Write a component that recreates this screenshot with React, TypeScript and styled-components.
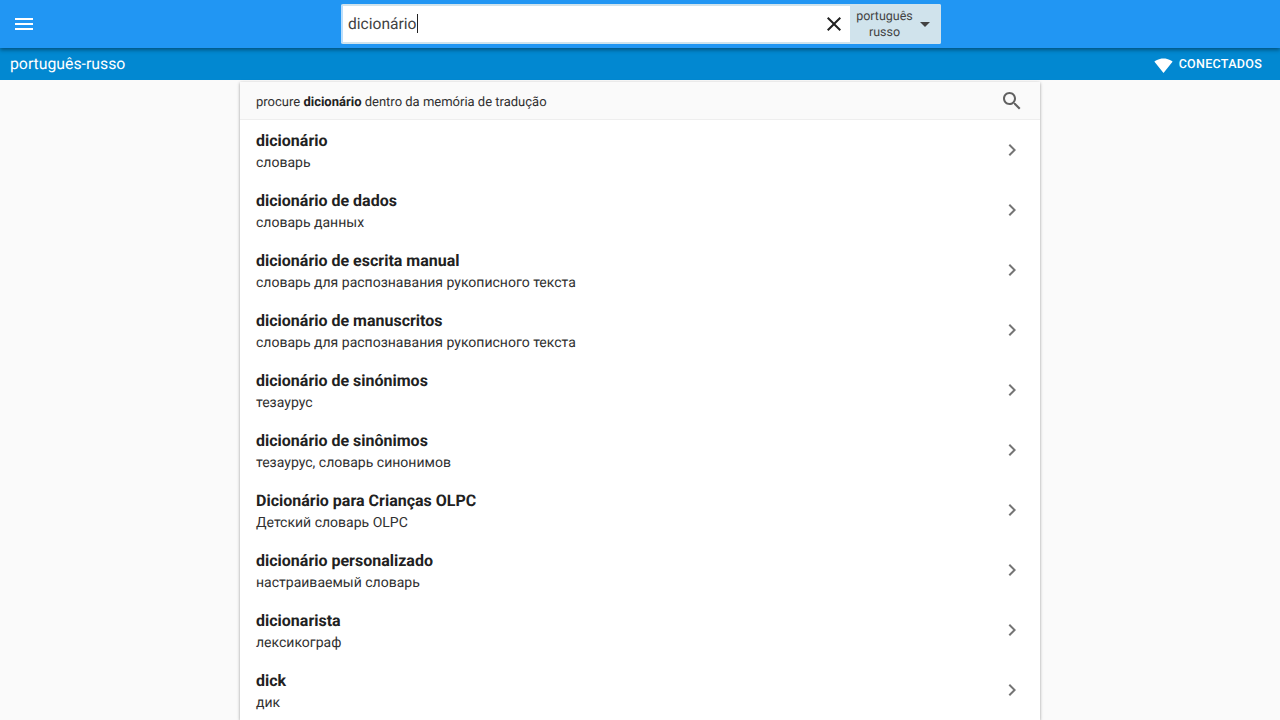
import React from "react";
import styled, { createGlobalStyle } from "styled-components";

const Global = createGlobalStyle`
  html, body { margin: 0; padding: 0; height: 720px; overflow: hidden; background: #fafafa; }
  body { font-family: Roboto, "Liberation Sans", sans-serif; color: #212121; text-rendering: geometricPrecision; }
`;

const Page = styled.div`
  display: flex;
  flex-direction: column;
  width: 1280px;
  height: 720px;
  overflow: hidden;
`;

const TopBar = styled.header`
  position: relative;
  z-index: 2;
  flex: none;
  height: 48px;
  background: #2196f3;
  box-shadow: 0 2px 4px rgba(0, 0, 0, 0.4);
  display: grid;
  grid-template-columns: 341px 600px 1fr;
  align-items: start;
`;

const MenuButton = styled.button`
  width: 48px;
  height: 48px;
  padding: 0;
  border: 0;
  background: none;
  display: flex;
  align-items: center;
  justify-content: center;
  color: #fff;
`;

const SearchBox = styled.div`
  margin-top: 4px;
  height: 40px;
  box-sizing: border-box;
  display: flex;
  border: 2px solid #d0e3ec;
  border-left-color: #bbdefb;
  border-radius: 2px;
  background: #d0e3ec;
`;

const InputArea = styled.div`
  flex: 1;
  background: #fff;
  display: flex;
  align-items: center;
  padding-left: 5px;
  font-size: 15.6px;
  color: #424242;
`;

const Caret = styled.span`
  display: inline-block;
  width: 1px;
  height: 19px;
  background: #212121;
`;

const Typed = styled.span`
  flex: 1;
  display: flex;
  align-items: center;
  padding-bottom: 1px;
`;

const ClearButton = styled.span`
  width: 32px;
  height: 36px;
  display: flex;
  align-items: center;
  justify-content: center;
  color: #212121;
`;

const LangSelect = styled.div`
  flex: none;
  width: 89px;
  display: flex;
  align-items: center;
  color: #424242;
`;

const LangNames = styled.div`
  width: 69px;
  padding-top: 2px;
  text-align: center;
  font-size: 12.5px;
  line-height: 16px;
`;

const Arrow = styled.span`
  display: flex;
  margin-left: -6px;
`;

const SubBar = styled.div`
  flex: none;
  height: 32px;
  background: #0288d1;
  color: #fff;
  display: flex;
  align-items: center;
  justify-content: space-between;
  padding: 0 18px 0 10px;
`;

const DictName = styled.div`
  font-size: 15.8px;
  padding-bottom: 2px;
`;

const Status = styled.div`
  display: flex;
  align-items: center;
  gap: 6px;
  font-size: 12.5px;
  font-weight: 500;
  letter-spacing: 0.3px;
`;

const WifiGlyph = styled.span`
  display: flex;
  padding-top: 2px;
`;

const Card = styled.main`
  width: 800px;
  margin: 2px auto 0;
  flex: none;
  background: #fff;
  box-shadow: 0 1px 3px rgba(0, 0, 0, 0.38);
`;

const SearchHint = styled.div`
  height: 37px;
  padding: 0 16px;
  background: #fafafa;
  border-bottom: 1px solid #eeeeee;
  display: flex;
  align-items: center;
  justify-content: space-between;
  font-size: 13px;
  color: #303030;
  b { font-weight: 700; color: #212121; }
  svg { color: #616161; }
`;

const HintText = styled.span`
  padding-top: 3px;
`;

const Row = styled.div`
  height: 60px;
  padding: 0 16px;
  display: flex;
  align-items: center;
  justify-content: space-between;
  color: #757575;
`;

const RowText = styled.div`
  display: flex;
  flex-direction: column;
  padding-top: 4px;
`;

const Term = styled.div`
  font-size: 16px;
  line-height: 22px;
  font-weight: 700;
  color: #212121;
`;

const Translation = styled.div`
  margin-top: 1px;
  font-size: 14.03px;
  line-height: 21px;
  color: #303030;
`;

const Icon = ({ d, size = 24 }: { d: string; size?: number }) => (
  <svg width={size} height={size} viewBox="0 0 24 24" fill="currentColor">
    <path d={d} />
  </svg>
);

const P = {
  menu: "M3 18h18v-2H3v2zm0-5h18v-2H3v2zm0-7v2h18V6H3z",
  close: "M19 6.41L17.59 5 12 10.59 6.41 5 5 6.41 10.59 12 5 17.59 6.41 19 12 13.41 17.59 19 19 17.59 13.41 12z",
  search: "M15.5 14h-.79l-.28-.27C15.41 12.59 16 11.11 16 9.5 16 5.91 13.09 3 9.5 3S3 5.91 3 9.5 5.91 16 9.5 16c1.61 0 3.09-.59 4.23-1.57l.27.28v.79l5 4.99L20.49 19l-4.99-5zm-6 0C7.01 14 5 11.99 5 9.5S7.01 5 9.5 5 14 7.01 14 9.5 11.99 14 9.5 14z",
  chevron: "M10 6L8.59 7.41 13.17 12l-4.58 4.59L10 18l6-6z",
  drop: "M7 10l5 5 5-5z",
  wifi: "M12.01 21.49L23.64 7c-.45-.34-4.93-4-11.64-4C5.28 3 .81 6.66.36 7l11.64 14.5.01-.01z",
};

const rows = [
  ["dicionário", "словарь"],
  ["dicionário de dados", "словарь данных"],
  ["dicionário de escrita manual", "словарь для распознавания рукописного текста"],
  ["dicionário de manuscritos", "словарь для распознавания рукописного текста"],
  ["dicionário de sinónimos", "тезаурус"],
  ["dicionário de sinônimos", "тезаурус, словарь синонимов"],
  ["Dicionário para Crianças OLPC", "Детский словарь OLPC"],
  ["dicionário personalizado", "настраиваемый словарь"],
  ["dicionarista", "лексикограф"],
  ["dick", "дик"],
];

export default function App() {
  return (
    <Page>
      <Global />
      <TopBar>
        <MenuButton aria-label="menu">
          <Icon d={P.menu} />
        </MenuButton>
        <SearchBox>
          <InputArea>
            <Typed>
              dicionário
              <Caret />
            </Typed>
            <ClearButton>
              <Icon d={P.close} />
            </ClearButton>
          </InputArea>
          <LangSelect>
            <LangNames>
              português
              <br />
              russo
            </LangNames>
            <Arrow>
              <Icon d={P.drop} />
            </Arrow>
          </LangSelect>
        </SearchBox>
      </TopBar>
      <SubBar>
        <DictName>português-russo</DictName>
        <Status>
          <WifiGlyph>
            <Icon d={P.wifi} size={19} />
          </WifiGlyph>
          CONECTADOS
        </Status>
      </SubBar>
      <Card>
        <SearchHint>
          <HintText>
            procure <b>dicionário</b> dentro da memória de tradução
          </HintText>
          <Icon d={P.search} />
        </SearchHint>
        {rows.map(([t, r]) => (
          <Row key={t}>
            <RowText>
              <Term>{t}</Term>
              <Translation>{r}</Translation>
            </RowText>
            <Icon d={P.chevron} />
          </Row>
        ))}
      </Card>
    </Page>
  );
}
